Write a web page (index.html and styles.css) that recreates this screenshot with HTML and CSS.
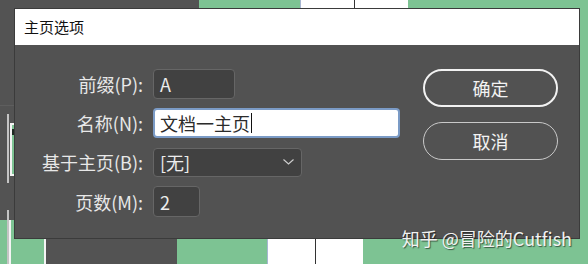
FILE: index.html
```html
<!DOCTYPE html>
<html lang="zh-CN">
<head>
    <meta charset="UTF-8">
    <title>主页选项</title>
    <link rel="stylesheet" href="styles.css">
</head>
<body>
    <!-- Pages panel behind the dialog -->
    <div class="canvas">
        <div class="rule rule-top"></div>
        <div class="guide guide-upper"></div>
        <div class="guide guide-lower"></div>
        <div class="thumb thumb-left"><span class="marker"></span></div>
        <div class="thumb-green bottom-left-a"></div>
        <div class="thumb-green bottom-left-b"></div>
        <div class="edge bottom-edge"></div>

        <div class="thumb-green top-green"></div>
        <div class="spread top-spread"><div class="page"></div><div class="page"></div></div>
        <div class="thumb-green right-green"></div>

        <div class="thumb-green bottom-green"></div>
        <div class="spread bottom-spread"><div class="page"></div><div class="page"></div></div>
        <div class="thumb-green bottom-right-green"></div>
    </div>

    <div class="dialog">
        <div class="dialog-title">主页选项</div>
        <div class="dialog-body">
            <div class="fields">
                <label class="field-label">前缀(P):</label>
                <div class="control control-prefix">A</div>

                <label class="field-label">名称(N):</label>
                <div class="control control-name">文档一主页<span class="caret"></span></div>

                <label class="field-label">基于主页(B):</label>
                <div class="control control-select">
                    <span>[无]</span>
                    <svg class="chevron" width="11" height="6" viewBox="0 0 11 6">
                        <polyline points="0.5,0.5 5.5,5 10.5,0.5" fill="none" stroke="#cfcfcf" stroke-width="1.1"/>
                    </svg>
                </div>

                <label class="field-label">页数(M):</label>
                <div class="control control-pages">2</div>
            </div>

            <div class="actions">
                <button class="btn btn-primary">确定</button>
                <button class="btn">取消</button>
            </div>
        </div>
    </div>

    <div class="watermark">知乎 @冒险的Cutfish</div>
</body>
</html>
```

FILE: styles.css
```css
/* Reset */
* {
    margin: 0;
    padding: 0;
    box-sizing: border-box;
}

body {
    width: 588px;
    height: 264px;
    overflow: hidden;
    position: relative;
    background-color: #535353;
    font-family: "Noto Sans CJK SC", "Noto Sans", sans-serif;
}

/* Pages panel thumbnails */
.canvas {
    position: absolute;
    inset: 0;
}

.canvas > div {
    position: absolute;
}

.thumb-green {
    background-color: #7dc393;
}

.rule-top {
    left: 0;
    top: 105px;
    width: 14px;
    height: 1px;
    background-color: #5e5e5e;
}

.guide {
    left: 7px;
    width: 2px;
    background-color: #c4c4c4;
}

.guide-upper {
    top: 114px;
    height: 69px;
}

.guide-lower {
    top: 210px;
    height: 54px;
}

.thumb-left {
    left: 10px;
    top: 123px;
    width: 10px;
    height: 53px;
    background-color: #7dc393;
    border: 2px solid #f4f4f4;
}

.marker {
    display: block;
    width: 3px;
    height: 6px;
    margin-top: 4px;
    background-color: #1f2a22;
}

.bottom-left-a {
    left: 0;
    top: 220px;
    width: 7px;
    height: 44px;
}

.bottom-left-b {
    left: 9px;
    top: 220px;
    width: 35px;
    height: 44px;
    border-left: 2px solid #f4f4f4;
}

.bottom-edge {
    left: 44px;
    top: 220px;
    width: 2px;
    height: 44px;
    background-color: #f4f4f4;
}

.top-green {
    left: 199px;
    top: 0;
    width: 101px;
    height: 40px;
}

.right-green {
    left: 408px;
    top: 0;
    width: 180px;
    height: 264px;
}

.bottom-green {
    left: 177px;
    top: 220px;
    width: 90px;
    height: 44px;
}

.bottom-right-green {
    left: 363px;
    top: 220px;
    width: 45px;
    height: 44px;
}

.spread {
    display: flex;
    background-color: #333;
    gap: 1px;
}

.spread .page {
    flex: 1;
    background-color: #fff;
}

.spread .page:first-child {
    border-left: 1px solid #a7b6d2;
}

.spread .page:last-child {
    border-right: 1px solid #a7b6d2;
}

.top-spread {
    left: 300px;
    top: 0;
    width: 109px;
    height: 40px;
}

.bottom-spread {
    left: 267px;
    top: 220px;
    width: 97px;
    height: 44px;
}

/* Dialog */
.dialog {
    position: absolute;
    left: 14px;
    top: 8px;
    width: 566px;
    height: 231px;
    background-color: #525252;
    border: 1px solid #3b3b3b;
}

.dialog-title {
    height: 36px;
    background-color: #fff;
    color: #111;
    font-size: 15px;
    line-height: 36px;
    padding-left: 9px;
}

.dialog-body {
    display: flex;
    align-items: flex-start;
    padding-top: 24px;
}

.fields {
    display: grid;
    grid-template-columns: 128px auto;
    column-gap: 10px;
    row-gap: 9px;
    align-items: center;
    width: 385px;
}

.field-label {
    text-align: right;
    color: #e8e8e8;
    font-size: 18px;
    line-height: 30px;
}

.control {
    height: 30px;
    display: flex;
    align-items: center;
    padding-left: 6px;
    font-size: 18px;
    color: #ededed;
    background-color: #414141;
    border: 1px solid #666;
    border-radius: 4px;
}

.control-prefix {
    width: 82px;
}

.control-name {
    width: 247px;
    padding-left: 5px;
    color: #2b2b2b;
    background-color: #fff;
    border: 2px solid #7b9bc6;
}

.caret {
    display: inline-block;
    width: 1px;
    height: 20px;
    margin-left: 1px;
    background-color: #111;
}

.control-select {
    width: 149px;
    height: 29px;
    justify-content: space-between;
    padding-right: 7px;
}

.chevron {
    display: block;
}

.control-pages {
    width: 47px;
    height: 31px;
}

.actions {
    display: flex;
    flex-direction: column;
    gap: 15px;
    margin-left: 23px;
}

.btn {
    width: 135px;
    height: 38px;
    border-radius: 19px;
    background: transparent;
    border: 1px solid #c9c9c9;
    color: #f3f3f3;
    font-family: inherit;
    font-size: 18px;
}

.btn-primary {
    border: 2px solid #f2f2f2;
}

.watermark {
    position: absolute;
    right: 16px;
    top: 225px;
    color: #f2f2f2;
    font-size: 18px;
    line-height: 26px;
    text-shadow: 1px 1px 1px rgba(0, 0, 0, 0.55);
}
```
